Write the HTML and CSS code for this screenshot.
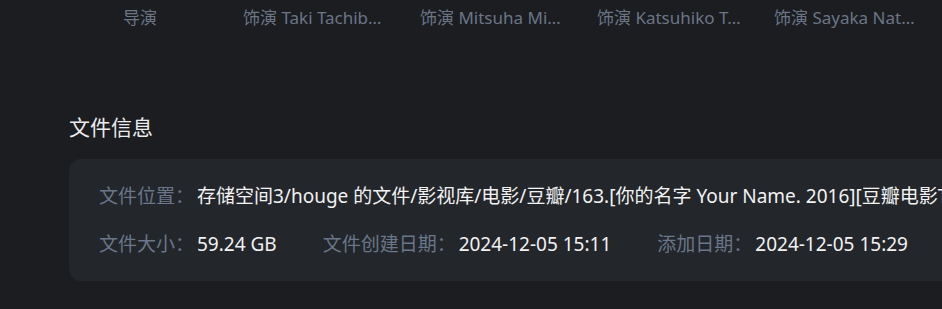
FILE: index.html
```html
<!doctype html>
<html lang="zh-CN">
<head>
  <meta charset="utf-8">
  <title>文件信息</title>
  <link rel="stylesheet" href="styles.css">
</head>
<body>
  <div class="page">
    <!-- cast row (cut off at top) -->
    <div class="cast">
      <div class="cast-item">导演</div>
      <div class="cast-item">饰演 Taki Tachibana</div>
      <div class="cast-item">饰演 Mitsuha Miyamizu</div>
      <div class="cast-item">饰演 Katsuhiko Teshigawara</div>
      <div class="cast-item">饰演 Sayaka Natori</div>
    </div>

    <!-- file info -->
    <section class="file-info">
      <h2 class="section-title">文件信息</h2>
      <div class="info-card">
        <div class="info-row">
          <div class="info-item">
            <span class="label">文件位置：</span>
            <span class="value">存储空间3/houge 的文件/影视库/电影/豆瓣/163.[你的名字 Your Name. 2016][豆瓣电影Top250]/你的名字.Your.Name.2016.2160p.UHD.BluRay.mkv</span>
          </div>
        </div>
        <div class="info-row">
          <div class="info-item">
            <span class="label">文件大小：</span>
            <span class="value">59.24 GB</span>
          </div>
          <div class="info-item">
            <span class="label">文件创建日期：</span>
            <span class="value">2024-12-05 15:11</span>
          </div>
          <div class="info-item">
            <span class="label">添加日期：</span>
            <span class="value">2024-12-05 15:29</span>
          </div>
        </div>
      </div>
    </section>
  </div>
</body>
</html>
```

FILE: styles.css
```css
/*----------------------------------------------
 * BASE
 *----------------------------------------------*/
html, body {
  margin: 0;
  padding: 0;
  background: #1b1d21;
  overflow: hidden;
  font-family: "Noto Sans", "Noto Sans CJK SC", sans-serif;
}

.page {
  width: 1400px;
  padding: 0 0 0 69px;
}

/*----------------------------------------------
 * CAST ROW
 *----------------------------------------------*/
.cast {
  display: flex;
  gap: 29px;
  margin-left: -3px;
  padding-top: 6px;
}

.cast-item {
  width: 148px;
  font-size: 17px;
  line-height: 24px;
  color: #6b7586;
  text-align: center;
  white-space: nowrap;
  overflow: hidden;
  text-overflow: ellipsis;
}

/*----------------------------------------------
 * FILE INFO
 *----------------------------------------------*/
.file-info {
  margin-top: 82px;
}

.section-title {
  margin: 0 0 17px;
  font-size: 21px;
  font-weight: normal;
  line-height: 30px;
  color: #ececec;
}

.info-card {
  background: #23262b;
  border-radius: 12px;
  padding: 25px 30px;
  display: flex;
  flex-direction: column;
  gap: 24px;
}

.info-row {
  display: flex;
  gap: 46px;
}

.info-item {
  font-size: 19px;
  line-height: 24px;
  white-space: nowrap;
}

.label {
  color: #6a7689;
  margin-right: -2px;
}

.value {
  color: #f2f2f2;
}
```
